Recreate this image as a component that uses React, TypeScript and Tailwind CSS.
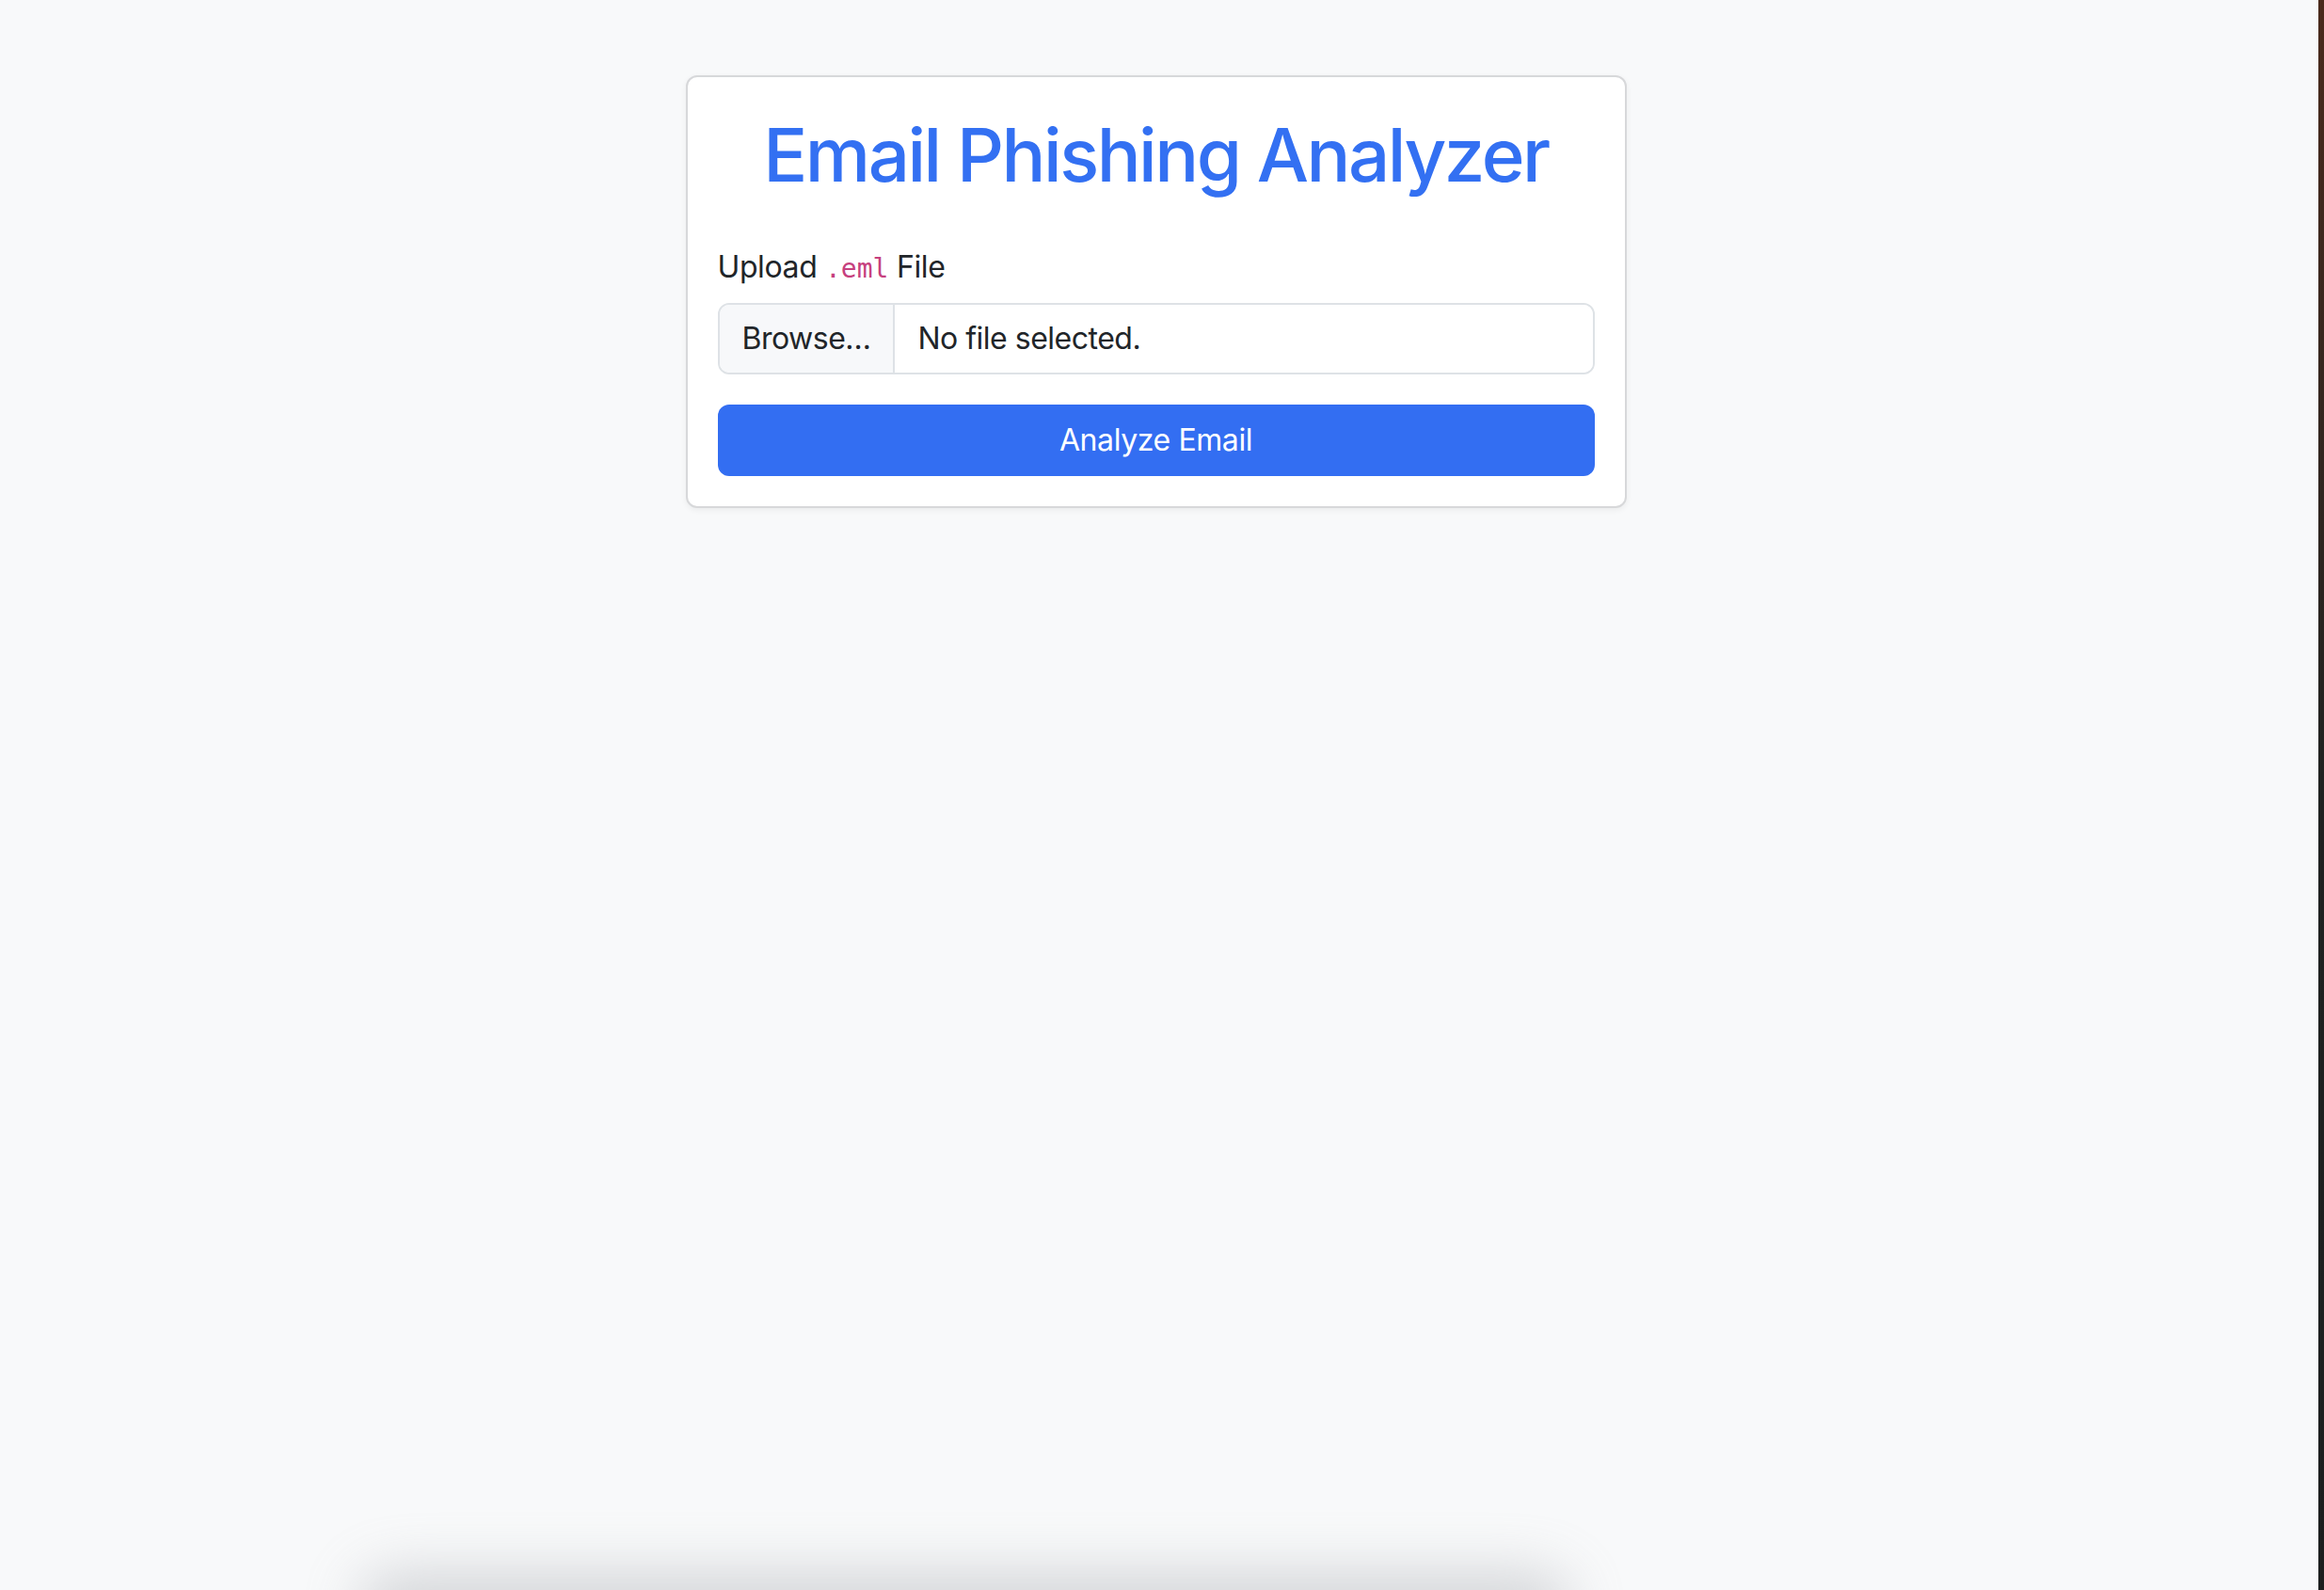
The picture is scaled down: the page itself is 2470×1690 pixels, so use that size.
import React from 'react';

const App: React.FC = () => {
  return (
    <div className="w-full h-[1690px] flex bg-[#f8f9fa] overflow-hidden relative font-['Inter','Helvetica_Neue','Liberation_Sans',sans-serif] text-[#212529]">
      {/* Main page area */}
      <div className="flex-1 flex justify-center items-start pt-[80px] pr-[7px]">
        <div className="w-[1000px] bg-white border-2 border-[#d7d8da] rounded-[12px] shadow-[0_2px_6px_rgba(0,0,0,0.06)] p-[32px] flex flex-col">
          <h1 className="text-[78px] leading-[96px] pt-[3px] font-medium text-[#3370f2] text-center mb-[47px] tracking-[-2.5px]">
            Email Phishing Analyzer
          </h1>

          <label className="text-[32px] leading-[48px] mb-[12px] tracking-[-0.4px]">
            Upload{' '}
            <code className="font-['DejaVu_Sans_Mono','Liberation_Mono',monospace] text-[28px] tracking-normal text-[#c6407e]">.eml</code>{' '}
            File
          </label>

          <div className="flex h-[76px] border-2 border-[#dee2e6] rounded-[12px] overflow-hidden mb-[32px] text-[32px] tracking-[-0.5px]">
            <div className="flex items-center px-[24px] bg-[#f7f8fa] border-r-2 border-[#dee2e6]">
              Browse…
            </div>
            <div className="flex items-center px-[24px] bg-white flex-1">No file selected.</div>
          </div>

          <button className="h-[76px] w-full rounded-[12px] bg-[#336ef2] text-white text-[32px] tracking-[-0.4px] flex items-center justify-center">
            Analyze Email
          </button>
        </div>
      </div>

      {/* Right edge of the neighbouring window */}
      <div className="w-[6px] h-full bg-gradient-to-b from-[#4a2a1c] via-[#1f2221] to-[#1c1f1f]" />

      {/* Window shadow bleeding in at the bottom */}
      <div className="absolute left-[380px] right-[800px] bottom-[-60px] h-[80px] bg-[#9fa2a8] opacity-40 blur-[30px] rounded-full" />
    </div>
  );
};

export default App;
